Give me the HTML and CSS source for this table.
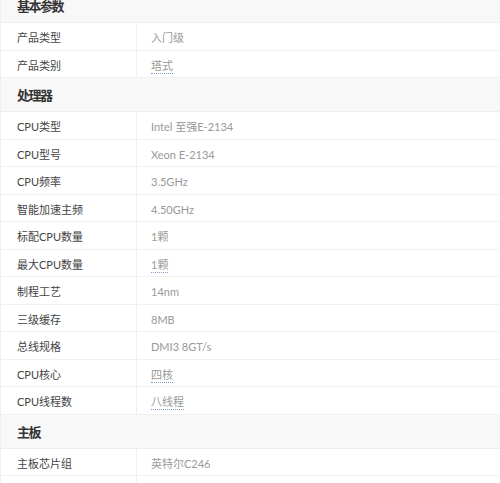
FILE: index.html
```html
<!DOCTYPE html>
<html lang="zh-CN">
<head>
    <meta charset="UTF-8">
    <meta name="viewport" content="width=device-width, initial-scale=1.0">
    <title>参数</title>
    <link rel="stylesheet" href="styles.css">
</head>
<body>
    <div class="params">
        <div class="group-title">基本参数</div>
        <div class="row"><div class="name">产品类型</div><div class="value">入门级</div></div>
        <div class="row"><div class="name">产品类别</div><div class="value"><span class="link">塔式</span></div></div>

        <div class="group-title">处理器</div>
        <div class="row"><div class="name">CPU类型</div><div class="value">Intel 至强E-2134</div></div>
        <div class="row"><div class="name">CPU型号</div><div class="value">Xeon E-2134</div></div>
        <div class="row"><div class="name">CPU频率</div><div class="value">3.5GHz</div></div>
        <div class="row"><div class="name">智能加速主频</div><div class="value">4.50GHz</div></div>
        <div class="row"><div class="name">标配CPU数量</div><div class="value">1颗</div></div>
        <div class="row"><div class="name">最大CPU数量</div><div class="value"><span class="link">1颗</span></div></div>
        <div class="row"><div class="name">制程工艺</div><div class="value">14nm</div></div>
        <div class="row"><div class="name">三级缓存</div><div class="value">8MB</div></div>
        <div class="row"><div class="name">总线规格</div><div class="value">DMI3 8GT/s</div></div>
        <div class="row"><div class="name">CPU核心</div><div class="value"><span class="link">四核</span></div></div>
        <div class="row"><div class="name">CPU线程数</div><div class="value"><span class="link">八线程</span></div></div>

        <div class="group-title">主板</div>
        <div class="row"><div class="name">主板芯片组</div><div class="value">英特尔C246</div></div>
        <div class="row"><div class="name">&nbsp;</div><div class="value">&nbsp;</div></div>
    </div>
</body>
</html>
```

FILE: styles.css
```css
body {
    margin: 0;
    background-color: #fff;
    font-family: Lato, "Noto Sans CJK SC", sans-serif;
    color: #333;
}
.params {
    margin-top: -11px;
    border-left: 1px solid #f0f0f0;
}
.group-title {
    height: 34px;
    line-height: 35px;
    padding-left: 16px;
    background-color: #f8f8f8;
    border-bottom: 1px solid #eee;
    font-size: 13px;
    font-weight: bold;
    letter-spacing: -1.5px;
    color: #333;
    box-sizing: border-box;
}
.row {
    display: grid;
    grid-template-columns: 136px 1fr;
    height: 27.5px;
    border-bottom: 1px solid #f0f0f0;
    box-sizing: border-box;
    font-size: 11px;
}
.name {
    padding-left: 16px;
    padding-top: 3px;
    line-height: 24px;
    color: #444;
    border-right: 1px solid #f0f0f0;
}
.value {
    padding-left: 14px;
    padding-top: 3px;
    line-height: 24px;
    color: #999;
}
.link {
    border-bottom: 1px dotted #7f9cc4;
    padding-bottom: 1px;
}
```
